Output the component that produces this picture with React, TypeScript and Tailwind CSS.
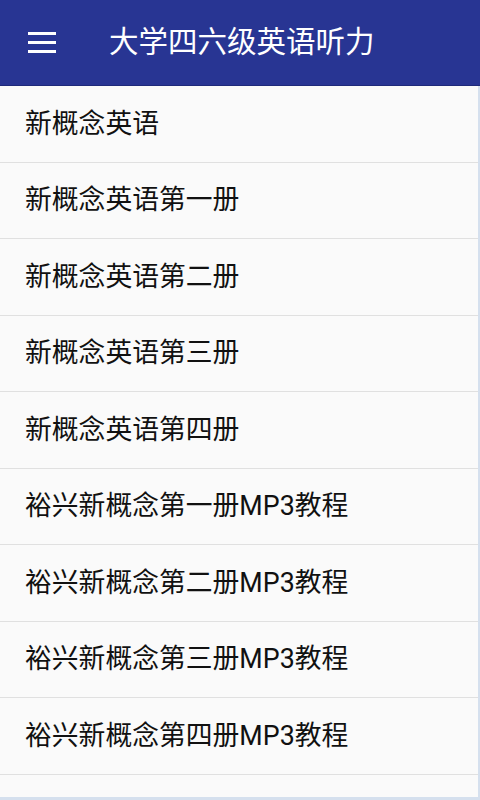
const items = [
  '新概念英语',
  '新概念英语第一册',
  '新概念英语第二册',
  '新概念英语第三册',
  '新概念英语第四册',
  '裕兴新概念第一册MP3教程',
  '裕兴新概念第二册MP3教程',
  '裕兴新概念第三册MP3教程',
  '裕兴新概念第四册MP3教程',
];

export default function App() {
  return (
    <div
      className="flex h-[800px] w-[480px] flex-col overflow-hidden bg-[#fafafa]"
      style={{ fontFamily: 'Roboto, "Noto Sans CJK SC", sans-serif' }}
    >
      <header className="flex h-[86px] shrink-0 items-center border-b border-[#1f2a7a] bg-[#283593]">
        <button className="ml-[28px] flex w-[28px] flex-col gap-[6px]">
          <span className="block h-[3px] w-[28px] bg-white" />
          <span className="block h-[3px] w-[28px] bg-white" />
          <span className="block h-[3px] w-[28px] bg-white" />
        </button>
        <h1 className="ml-[53px] text-[29.5px] leading-none text-white">大学四六级英语听力</h1>
      </header>

      <div className="flex flex-1 flex-col border-r-2 border-[#d5e0ee]">
        <ul className="flex-1">
          {items.map((title) => (
            <li
              key={title}
              className="flex h-[76.5px] items-center border-b border-[#e0e0e0] pl-[25px] pt-[1px] text-[26.8px] leading-none text-[#111]"
            >
              {title}
            </li>
          ))}
        </ul>
      </div>
      <div className="h-[3px] shrink-0 bg-[#d5e0ee]" />
    </div>
  );
}
